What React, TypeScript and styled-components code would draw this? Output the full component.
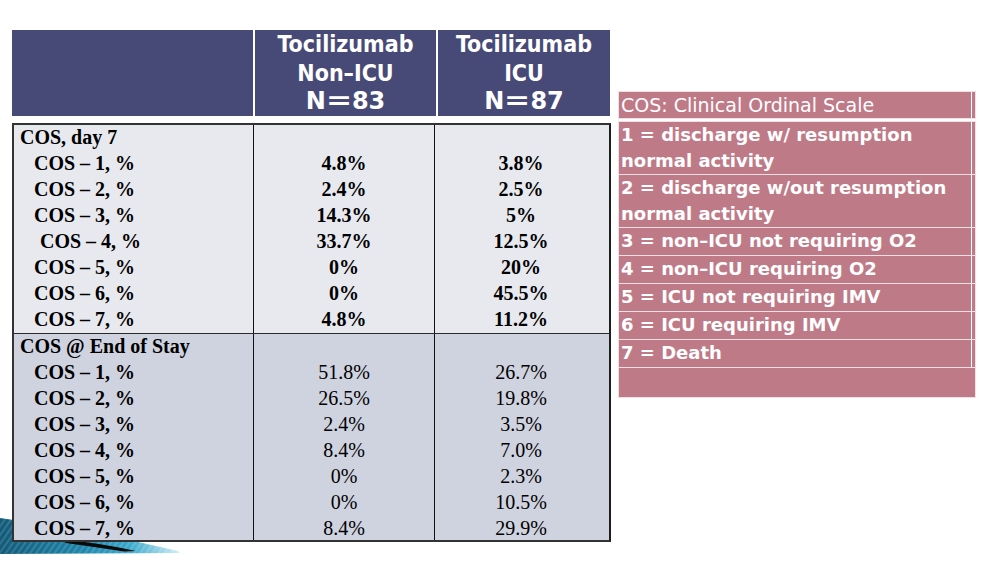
import React from "react"
import styled, { createGlobalStyle } from "styled-components"

const GlobalStyle = createGlobalStyle`
  html, body {
    margin: 0;
    padding: 0;
    background: #ffffff;
  }
  body {
    width: 990px;
    height: 564px;
    overflow: hidden;
  }
`

type Row = { label: string; nonIcu: string; icu: string; indent?: number }

const day7: Row[] = [
  { label: "COS – 1, %", nonIcu: "4.8%", icu: "3.8%" },
  { label: "COS – 2, %", nonIcu: "2.4%", icu: "2.5%" },
  { label: "COS – 3, %", nonIcu: "14.3%", icu: "5%" },
  { label: "COS – 4, %", nonIcu: "33.7%", icu: "12.5%", indent: 6 },
  { label: "COS – 5, %", nonIcu: "0%", icu: "20%" },
  { label: "COS – 6, %", nonIcu: "0%", icu: "45.5%" },
  { label: "COS – 7, %", nonIcu: "4.8%", icu: "11.2%" },
]

const endOfStay: Row[] = [
  { label: "COS – 1, %", nonIcu: "51.8%", icu: "26.7%" },
  { label: "COS – 2, %", nonIcu: "26.5%", icu: "19.8%" },
  { label: "COS – 3, %", nonIcu: "2.4%", icu: "3.5%" },
  { label: "COS – 4, %", nonIcu: "8.4%", icu: "7.0%" },
  { label: "COS – 5, %", nonIcu: "0%", icu: "2.3%" },
  { label: "COS – 6, %", nonIcu: "0%", icu: "10.5%" },
  { label: "COS – 7, %", nonIcu: "8.4%", icu: "29.9%" },
]

const legend = [
  "1 = discharge w/ resumption normal activity",
  "2 = discharge w/out resumption normal activity",
  "3 = non–ICU not requiring O2",
  "4 = non–ICU requiring O2",
  "5 = ICU not requiring IMV",
  "6 = ICU requiring IMV",
  "7 = Death",
]

const Section: React.FC<{ title: string; rows: Row[]; bold: boolean; shade: string; last?: boolean }> = ({
  title,
  rows,
  bold,
  shade,
  last,
}) => (
  <SectionGrid $shade={shade} $last={last}>
    <LabelCell>
      <Title>{title}</Title>
      {rows.map((r) => (
        <Label key={r.label} $indent={r.indent ?? 0}>
          {r.label}
        </Label>
      ))}
    </LabelCell>
    <ValueCell>
      <Value $bold={bold}>&nbsp;</Value>
      {rows.map((r, i) => (
        <Value key={i} $bold={bold}>
          {r.nonIcu}
        </Value>
      ))}
    </ValueCell>
    <ValueCell $end>
      <Value $bold={bold}>&nbsp;</Value>
      {rows.map((r, i) => (
        <Value key={i} $bold={bold}>
          {r.icu}
        </Value>
      ))}
    </ValueCell>
  </SectionGrid>
)

const Swoosh = () => (
  <SwooshArt width="190" height="46" viewBox="0 0 190 46">
    <defs>
      <linearGradient id="sw" x1="0" y1="0" x2="1" y2="0">
        <stop offset="0" stopColor="#125a78" />
        <stop offset="0.45" stopColor="#1d84a9" />
        <stop offset="0.72" stopColor="#3aa9cc" />
        <stop offset="1" stopColor="#d2eef7" />
      </linearGradient>
      <pattern id="st" width="5" height="5" patternUnits="userSpaceOnUse" patternTransform="rotate(35)">
        <rect width="2" height="5" fill="#ffffff" fillOpacity="0.14" />
      </pattern>
    </defs>
    <path d="M0,2 Q90,14 178,35 L180,37 L0,38 Z" fill="url(#sw)" />
    <path d="M0,2 Q90,14 178,35 L180,37 L0,38 Z" fill="url(#st)" />
    <path d="M60,23 Q100,27 136,35 L124,35.5 Q95,31 66,27 Z" fill="#0a0a0a" />
  </SwooshArt>
)

const Count: React.FC<{ n: number }> = ({ n }) => (
  <CountLine>
    N<Eq>=</Eq>
    {n}
  </CountLine>
)

export default function App() {
  return (
    <>
      <GlobalStyle />
      <Slide>
        <Swoosh />
        <TableBlock>
          <HeaderRow>
            <HeadCell />
            <HeadCell>
              Tocilizumab
              <br />
              Non–ICU
              <br />
              <Count n={83} />
            </HeadCell>
            <HeadCell>
              Tocilizumab
              <br />
              ICU
              <br />
              <Count n={87} />
            </HeadCell>
          </HeaderRow>
          <Body>
            <Section title="COS, day 7" rows={day7} bold shade="#e8e9ef" />
            <Section title="COS @ End of Stay" rows={endOfStay} bold={false} shade="#cfd3df" last />
          </Body>
        </TableBlock>
        <Legend>
          <LegendRow $first>
            <LegendText>COS: Clinical Ordinal Scale</LegendText>
            <LegendEdge />
          </LegendRow>
          {legend.map((t) => (
            <LegendRow key={t}>
              <LegendText $bold>{t}</LegendText>
              <LegendEdge />
            </LegendRow>
          ))}
          <LegendRow $empty />
        </Legend>
      </Slide>
    </>
  )
}

const Slide = styled.div`
  position: relative;
  width: 990px;
  height: 564px;
  box-sizing: border-box;
  padding: 30px 0 0 12px;
  display: flex;
  align-items: flex-start;
  background: #ffffff;
`

const SwooshArt = styled.svg`
  position: absolute;
  left: 0;
  top: 516px;
  z-index: 0;
`

const TableBlock = styled.div`
  position: relative;
  z-index: 1;
  width: 599px;
  display: flex;
  flex-direction: column;
  gap: 7px;
`

const HeaderRow = styled.div`
  display: grid;
  grid-template-columns: 241px 181px 172px;
  gap: 2px;
  height: 86px;
`

const HeadCell = styled.div`
  background: #474a77;
  color: #ffffff;
  font-family: "DejaVu Sans Condensed", "DejaVu Sans", sans-serif;
  font-weight: bold;
  font-size: 23px;
  line-height: 28.5px;
  text-align: center;
`

const CountLine = styled.span`
  font-family: "DejaVu Sans", sans-serif;
  font-size: 24px;
`

const Eq = styled.span`
  display: inline-block;
  margin: 0 3px;
  transform: scaleX(1.3);
`

const Body = styled.div`
  border: 2px solid #333333;
  border-right-color: #1e1e1e;
`

const SectionGrid = styled.div<{ $shade: string; $last?: boolean }>`
  display: grid;
  grid-template-columns: 240px 181px 172px;
  background: ${(p) => p.$shade};
  border-bottom: ${(p) => (p.$last ? "none" : "1px solid #2a2a2a")};
  font-family: "Liberation Serif", "Times New Roman", serif;
  font-size: 20px;
  color: #000000;

  & > div > div:last-child {
    height: ${(p) => (p.$last ? 24 : 26)}px;
  }
`

const LabelCell = styled.div`
  border-right: 1px solid #111111;
  padding-left: 6px;
`

const ValueCell = styled.div<{ $end?: boolean }>`
  border-right: ${(p) => (p.$end ? "none" : "1px solid #111111")};
  text-align: center;
`

const Title = styled.div`
  height: 26px;
  line-height: 24px;
  font-weight: bold;
`

const Label = styled.div<{ $indent: number }>`
  height: 26px;
  line-height: 24px;
  font-weight: bold;
  padding-left: ${(p) => 14 + p.$indent}px;
`

const Value = styled.div<{ $bold: boolean }>`
  height: 26px;
  line-height: 24px;
  font-weight: ${(p) => (p.$bold ? "bold" : "normal")};
`

const Legend = styled.div`
  margin: 62px 0 0 8px;
  width: 356px;
  display: flex;
  flex-direction: column;
  gap: 1px;
`

const LegendRow = styled.div<{ $first?: boolean; $empty?: boolean }>`
  display: flex;
  gap: 1px;
  min-height: ${(p) => (p.$first ? 24 : p.$empty ? 29 : 27)}px;
  margin-bottom: ${(p) => (p.$first ? 3 : 0)}px;
  background: ${(p) => (p.$empty ? "#bf7a88" : "transparent")};
  outline: 1px solid #f2dfe3;
`

const LegendText = styled.div<{ $bold?: boolean }>`
  flex: 1;
  background: #bf7a88;
  color: #ffffff;
  padding: 0 8px 0 2px;
  font-family: "DejaVu Sans", "Liberation Sans", sans-serif;
  font-weight: ${(p) => (p.$bold ? "bold" : "normal")};
  font-size: ${(p) => (p.$bold ? 18 : 19)}px;
  line-height: 26px;
`

const LegendEdge = styled.div`
  width: 3px;
  background: #bf7a88;
`
